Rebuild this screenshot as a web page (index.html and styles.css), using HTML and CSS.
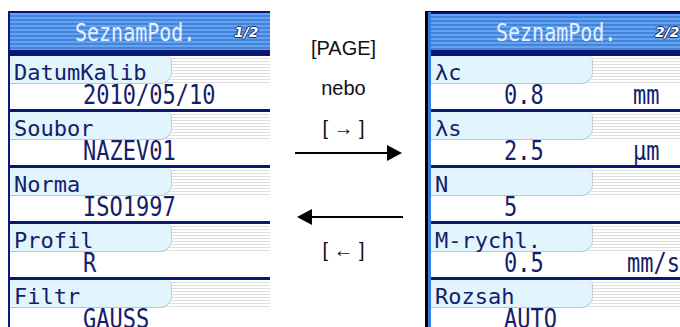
FILE: index.html
```html
<!DOCTYPE html>
<html>

<head>
    <meta charset="UTF-8">
    <meta name="viewport" content="width=device-width">
    <title>SeznamPod.</title>
    <link rel="stylesheet" href="styles.css">
</head>

<body>
    <div class="page">
        <!-- strana 1/2 -->
        <section class="panel">
            <header class="bar">
                <span class="title">SeznamPod.</span>
                <span class="pg">1/2</span>
            </header>
            <div class="item">
                <div class="lbl"><span class="pill">DatumKalib</span></div>
                <div class="val"><span class="num">2010/05/10</span></div>
            </div>
            <div class="item">
                <div class="lbl"><span class="pill">Soubor</span></div>
                <div class="val"><span class="num">NAZEV01</span></div>
            </div>
            <div class="item">
                <div class="lbl"><span class="pill">Norma</span></div>
                <div class="val"><span class="num">ISO1997</span></div>
            </div>
            <div class="item">
                <div class="lbl"><span class="pill">Profil</span></div>
                <div class="val"><span class="num">R</span></div>
            </div>
            <div class="item">
                <div class="lbl"><span class="pill">Filtr</span></div>
                <div class="val"><span class="num">GAUSS</span></div>
            </div>
        </section>

        <!-- prechod mezi stranami -->
        <div class="mid">
            <p>[PAGE]</p>
            <p>nebo</p>
            <p>[ → ]</p>
            <svg class="arrow first" width="147" height="18" viewBox="0 0 147 18">
                <line x1="25" y1="9" x2="120" y2="9" stroke="#000" stroke-width="2" />
                <polygon points="117,1 132,9 117,17" fill="#000" />
            </svg>
            <svg class="arrow second" width="147" height="18" viewBox="0 0 147 18">
                <line x1="38" y1="9" x2="133" y2="9" stroke="#000" stroke-width="2" />
                <polygon points="42,1 27,9 42,17" fill="#000" />
            </svg>
            <p class="last">[ ← ]</p>
        </div>

        <!-- strana 2/2 -->
        <section class="panel right">
            <header class="bar">
                <span class="title">SeznamPod.</span>
                <span class="pg">2/2</span>
            </header>
            <div class="item">
                <div class="lbl"><span class="pill">λc</span></div>
                <div class="val"><span class="num">0.8</span><span class="unit">mm</span></div>
            </div>
            <div class="item">
                <div class="lbl"><span class="pill">λs</span></div>
                <div class="val"><span class="num">2.5</span><span class="unit">µm</span></div>
            </div>
            <div class="item">
                <div class="lbl"><span class="pill">N</span></div>
                <div class="val"><span class="num">5</span></div>
            </div>
            <div class="item">
                <div class="lbl"><span class="pill">M-rychl.</span></div>
                <div class="val"><span class="num">0.5</span><span class="unit">mm/s</span></div>
            </div>
            <div class="item">
                <div class="lbl"><span class="pill">Rozsah</span></div>
                <div class="val"><span class="num">AUTO</span></div>
            </div>
        </section>
    </div>
</body>

</html>
```

FILE: styles.css
```css
* {
    box-sizing: border-box;
}

body {
    margin: 0;
    background: #fff;
    height: 327px;
    overflow: hidden;
}

.page {
    display: flex;
    height: 327px;
    padding: 11px 0 0 8px;
}

/*********************/
/* Displej pristroje */
/*********************/
.panel {
    width: 262px;
    flex-shrink: 0;
    overflow: hidden;
    border-left: 2px solid #0b1a78;
    font-family: "DejaVu Sans Mono", monospace;
    color: #13206a;
}

.panel.right {
    width: 255px;
    border-left: 3px solid #000;
    border-top: 1px solid #000;
    padding-left: 3px;
    background: #3b7be0;
}

.bar {
    display: flex;
    align-items: center;
    height: 45px;
    border-top: 2px solid #0a1670;
    border-bottom: 6px solid #0a1670;
    background: repeating-linear-gradient(#63a3f0 0 2px, #4383dc 2px 4px);
}

.right .bar {
    height: 44px;
}

.title {
    display: inline-block;
    margin-left: 65px;
    width: 159px;
    font-size: 20px;
    color: #e6f1ff;
    transform: scaleY(1.25);
}

.pg {
    font-family: "DejaVu Sans", sans-serif;
    font-size: 14px;
    font-weight: bold;
    font-style: italic;
    color: #fff;
    text-shadow: -1px 0 #1a2a60, 1px 0 #1a2a60, 0 -1px #1a2a60, 0 1px #1a2a60;
}

/*********************/
/* Radky s hodnotami */
/*********************/
.item+.item {
    border-top: 3px solid #0a1670;
}

.lbl {
    display: flex;
    height: 28px;
    background: repeating-linear-gradient(#fff 0 2px, #dedede 2px 3px);
}

.pill {
    width: 162px;
    height: 28px;
    padding: 6px 0 0 4px;
    font-size: 22px;
    line-height: 22px;
    background: #e2f5fc;
    border-bottom: 1px solid #b7c6d6;
    border-right: 1px solid #c4d0dc;
    border-radius: 0 5px 12px 0;
}

.val {
    display: flex;
    height: 25px;
    background: #fff;
    font-size: 22px;
    line-height: 25px;
}

.num {
    display: inline-block;
    margin-left: 73px;
    width: 129px;
    white-space: pre;
    transform: scaleY(1.2);
    transform-origin: 50% 85%;
}

.unit {
    display: inline-block;
    transform: scaleY(1.2);
    transform-origin: 50% 85%;
}

/*********************/
/* Sipky uprostred */
/*********************/
.mid {
    width: 155px;
    flex-shrink: 0;
    display: flex;
    flex-direction: column;
    align-items: center;
    padding: 27px 8px 0 0;
    font-family: "Liberation Sans", Arial, sans-serif;
    font-size: 20px;
    color: #111;
}

.mid p {
    margin: 0 0 20px;
    line-height: 20px;
}

.arrow {
    display: block;
    align-self: flex-start;
}

.arrow.first {
    margin-top: -14px;
}

.arrow.second {
    margin-top: 46px;
}

.mid p.last {
    margin-top: 14px;
}
```
